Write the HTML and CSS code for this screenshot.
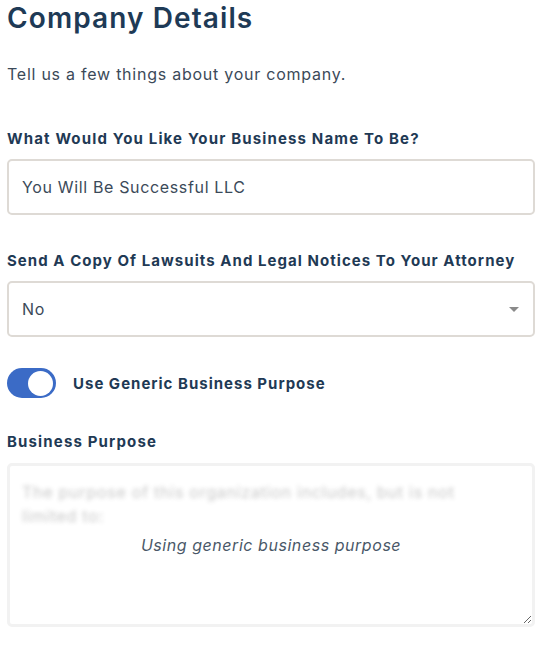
FILE: index.html
```html
<!DOCTYPE html>
<html lang="en">
<head>
<meta charset="utf-8">
<title>Company Details</title>
<link rel="stylesheet" href="styles.css">
</head>
<body>
<main class="page">
  <h1 class="title">Company Details</h1>
  <p class="subtitle">Tell us a few things about your company.</p>

  <div class="field field-first">
    <label class="label" for="bizname">What Would You Like Your Business Name To Be?</label>
    <input id="bizname" class="input" type="text" value="You Will Be Successful LLC">
  </div>

  <div class="field">
    <label class="label label-tight">Send A Copy Of Lawsuits And Legal Notices To Your Attorney</label>
    <div class="select">
      <span class="select-value">No</span>
      <svg class="caret" width="10" height="5" viewBox="0 0 10 5"><path d="M0 0 H10 L5 5 Z" fill="#8a8a8a"/></svg>
    </div>
  </div>

  <div class="toggle-row">
    <span class="toggle"><span class="knob"></span></span>
    <span class="toggle-label">Use Generic Business Purpose</span>
  </div>

  <div class="field field-purpose">
    <label class="label" for="purpose">Business Purpose</label>
    <div class="textarea-wrap">
      <textarea id="purpose" class="textarea" readonly>The purpose of this organization includes, but is not limited to:</textarea>
      <span class="overlay-note">Using generic business purpose</span>
    </div>
  </div>
</main>
</body>
</html>
```

FILE: styles.css
```css
html, body {
  margin: 0;
  padding: 0;
  background: #ffffff;
}

body {
  font-family: "Inter", "DejaVu Sans", sans-serif;
  color: #1f3a55;
}

.page {
  width: 528px;
  padding: 0 15px 0 7px;
}

.title {
  margin: 0;
  font-size: 28px;
  line-height: 36px;
  font-weight: 600;
  letter-spacing: 1.1px;
  color: #1e3a56;
}

.subtitle {
  margin: 26px 0 0;
  font-size: 16px;
  line-height: 24px;
  letter-spacing: 0.75px;
  color: #3b4a59;
}

.field {
  display: flex;
  flex-direction: column;
  gap: 10px;
  margin-top: 36px;
}

.field-first {
  margin-top: 43px;
}

.label {
  font-size: 15px;
  line-height: 20px;
  font-weight: 700;
  letter-spacing: 1.15px;
  color: #1f3a55;
}

.label-tight {
  letter-spacing: 1.05px;
}

.input,
.select {
  box-sizing: border-box;
  width: 528px;
  height: 56px;
  border: 2px solid #dedad5;
  border-radius: 5px;
  padding: 0 13px;
  font-family: inherit;
  font-size: 16px;
  letter-spacing: 0.65px;
  color: #3b4a59;
  background: #fff;
  outline: none;
}

.select {
  display: flex;
  align-items: center;
  justify-content: space-between;
  padding-right: 14px;
}

.caret {
  display: block;
}

.toggle-row {
  display: flex;
  align-items: center;
  gap: 17px;
  margin-top: 31px;
}

.toggle {
  box-sizing: border-box;
  width: 49px;
  height: 30px;
  border-radius: 15px;
  background: #3b6bc6;
  display: flex;
  align-items: center;
  justify-content: flex-end;
  padding-right: 3px;
}

.knob {
  width: 25px;
  height: 25px;
  border-radius: 50%;
  background: #fff;
}

.toggle-label {
  font-size: 15px;
  font-weight: 700;
  letter-spacing: 1px;
  color: #1f3a55;
}

.field-purpose {
  margin-top: 34px;
  gap: 11px;
}

.textarea-wrap {
  position: relative;
  width: 528px;
  height: 164px;
}

.textarea {
  box-sizing: border-box;
  width: 528px;
  height: 164px;
  border: 3px solid #f2f2f2;
  border-radius: 5px;
  padding: 14px 60px 14px 12px;
  font-family: inherit;
  font-size: 16px;
  line-height: 24px;
  letter-spacing: 0.75px;
  color: transparent;
  text-shadow: 0 0 4px rgba(60, 60, 60, 0.28);
  background: #fff;
  resize: vertical;
  outline: none;
}

.overlay-note {
  position: absolute;
  left: 0;
  right: 0;
  top: 72px;
  text-align: center;
  font-size: 16px;
  font-style: italic;
  letter-spacing: 0.55px;
  color: #4a5868;
}
```
